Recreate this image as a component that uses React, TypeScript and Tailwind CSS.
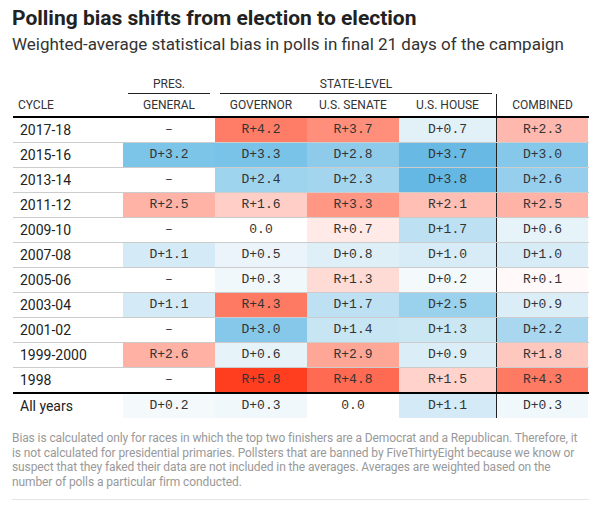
const rows: string[][] = [
  ['2017-18', '–', 'R+4.2', 'R+3.7', 'D+0.7', 'R+2.3'],
  ['2015-16', 'D+3.2', 'D+3.3', 'D+2.8', 'D+3.7', 'D+3.0'],
  ['2013-14', '–', 'D+2.4', 'D+2.3', 'D+3.8', 'D+2.6'],
  ['2011-12', 'R+2.5', 'R+1.6', 'R+3.3', 'R+2.1', 'R+2.5'],
  ['2009-10', '–', '0.0', 'R+0.7', 'D+1.7', 'D+0.6'],
  ['2007-08', 'D+1.1', 'D+0.5', 'D+0.8', 'D+1.0', 'D+1.0'],
  ['2005-06', '–', 'D+0.3', 'R+1.3', 'D+0.2', 'R+0.1'],
  ['2003-04', 'D+1.1', 'R+4.3', 'D+1.7', 'D+2.5', 'D+0.9'],
  ['2001-02', '–', 'D+3.0', 'D+1.4', 'D+1.3', 'D+2.2'],
  ['1999-2000', 'R+2.6', 'D+0.6', 'R+2.9', 'D+0.9', 'R+1.8'],
  ['1998', '–', 'R+5.8', 'R+4.8', 'R+1.5', 'R+4.3'],
];

const allYears = ['All years', 'D+0.2', 'D+0.3', '0.0', 'D+1.1', 'D+0.3'];

// shade per bias value
const shade: Record<string, string> = {
  'R+5.8': 'bg-[#ff3d1f]',
  'R+4.8': 'bg-[#ff6b52]',
  'R+4.3': 'bg-[#ff7a62]',
  'R+4.2': 'bg-[#ff7c66]',
  'R+3.7': 'bg-[#ff8f7a]',
  'R+3.3': 'bg-[#ff9784]',
  'R+2.9': 'bg-[#ffa797]',
  'R+2.6': 'bg-[#ffb1a4]',
  'R+2.5': 'bg-[#ffb3a7]',
  'R+2.3': 'bg-[#ffb8ad]',
  'R+2.1': 'bg-[#ffbfb4]',
  'R+1.8': 'bg-[#ffc8bf]',
  'R+1.6': 'bg-[#ffcfc7]',
  'R+1.5': 'bg-[#ffd3cc]',
  'R+1.3': 'bg-[#ffdbd5]',
  'R+0.7': 'bg-[#ffeae7]',
  'R+0.1': 'bg-[#fffaf9]',
  'D+3.8': 'bg-[#64b8e3]',
  'D+3.7': 'bg-[#68bae4]',
  'D+3.3': 'bg-[#79c2e8]',
  'D+3.2': 'bg-[#7dc4e9]',
  'D+3.0': 'bg-[#86c8ea]',
  'D+2.8': 'bg-[#8ecbeb]',
  'D+2.6': 'bg-[#96cfed]',
  'D+2.5': 'bg-[#9ad1ed]',
  'D+2.4': 'bg-[#9fd4ee]',
  'D+2.3': 'bg-[#a3d5ee]',
  'D+2.2': 'bg-[#a8d7ef]',
  'D+1.7': 'bg-[#bde1f2]',
  'D+1.4': 'bg-[#c8e5f3]',
  'D+1.3': 'bg-[#cce7f4]',
  'D+1.1': 'bg-[#d4eaf6]',
  'D+1.0': 'bg-[#d7ecf6]',
  'D+0.9': 'bg-[#dbeef7]',
  'D+0.8': 'bg-[#dfeff7]',
  'D+0.7': 'bg-[#e2f1f8]',
  'D+0.6': 'bg-[#e6f3f9]',
  'D+0.5': 'bg-[#eaf4fa]',
  'D+0.3': 'bg-[#f1f8fc]',
  'D+0.2': 'bg-[#f4f9fc]',
};

const cols = 'grid grid-cols-[110px_92px_92px_92px_98px_91px]';
const sans = "font-['Roboto',sans-serif]";
const mono = "font-['Liberation_Mono',monospace]";

const Row = ({ cells, last }: { cells: string[]; last?: boolean }) => (
  <div className={`${cols} ${last ? 'h-[24px]' : 'h-[25px] border-b border-[#cccccc]'}`}>
    <div className={`${sans} flex items-center pl-[7px] text-[14px] text-[#222]`}>{cells[0]}</div>
    {cells.slice(1).map((v, i) => (
      <div
        key={i}
        className={`${mono} flex items-center justify-center text-[13px] text-[#333] ${shade[v] ?? ''} ${
          i === 3 ? 'border-r border-[#222]' : ''
        }`}
      >
        {v}
      </div>
    ))}
  </div>
);

export default function App() {
  return (
    <div className={`${sans} w-[601px] h-[506px] bg-white px-[12px] pt-[6px]`}>
      <h1 className="text-[21px] leading-[24px] font-bold text-[#222]">
        Polling bias shifts from election to election
      </h1>
      <p className="mt-[4px] text-[17px] leading-[20px] text-[#333]">
        Weighted-average statistical bias in polls in final 21 days of the campaign
      </p>

      <div className="mt-[20px] ml-px w-[576px] text-[12px] text-[#333]">
        {/* group headers */}
        <div className={`${cols} h-[20px]`}>
          <div />
          <div className="mx-[5px] flex items-center justify-center border-b border-[#222]">PRES.</div>
          <div className="col-span-3 mx-[5px] flex items-center justify-center border-b border-[#222]">
            STATE-LEVEL
          </div>
          <div />
        </div>
        <div className={`${cols} h-[24px] border-b-2 border-black`}>
          <div className="flex items-center pl-[5px]">CYCLE</div>
          <div className="flex items-center justify-center">GENERAL</div>
          <div className="flex items-center justify-center">GOVERNOR</div>
          <div className="flex items-center justify-center">U.S. SENATE</div>
          <div className="flex items-center justify-center border-r border-[#222]">U.S. HOUSE</div>
          <div className="flex items-center justify-center">COMBINED</div>
        </div>

        {rows.map((r, i) => (
          <div key={r[0]} className={i === rows.length - 1 ? 'border-b-2 border-black' : ''}>
            <Row cells={r} last={i === rows.length - 1} />
          </div>
        ))}
        <Row cells={allYears} last />
      </div>

      <p className="mt-[13px] pb-[10px] border-b border-[#e5e5e5] text-[12px] leading-[14.5px] tracking-[-0.1px] text-[#999]">
        Bias is calculated only for races in which the top two finishers are a Democrat and a Republican. Therefore, it
        is not calculated for presidential primaries. Pollsters that are banned by FiveThirtyEight because we know or
        suspect that they faked their data are not included in the averages. Averages are weighted based on the
        number of polls a particular firm conducted.
      </p>
    </div>
  );
}
